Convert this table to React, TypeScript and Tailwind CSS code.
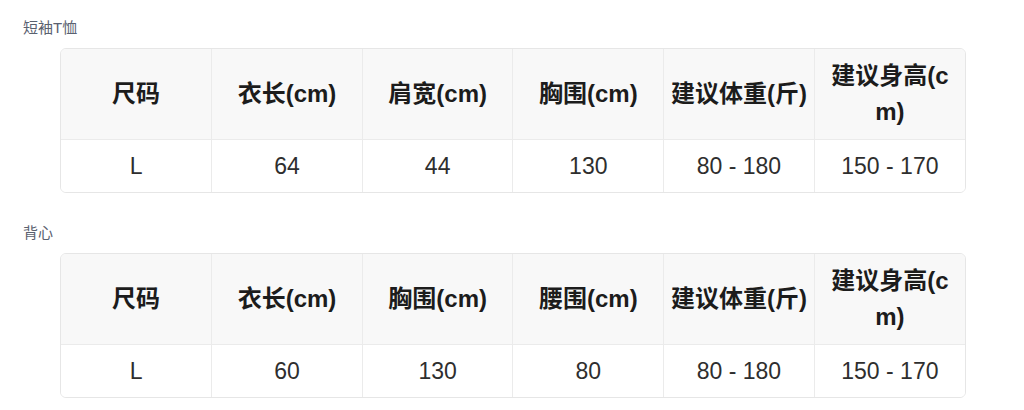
const FONT = "font-['Liberation_Sans','Noto_Sans_CJK_SC',sans-serif]";

type SizeTable = {
  title: string;
  headers: string[];
  rows: string[][];
};

const tables: SizeTable[] = [
  {
    title: '短袖T恤',
    headers: ['尺码', '衣长(cm)', '肩宽(cm)', '胸围(cm)', '建议体重(斤)', '建议身高(cm)'],
    rows: [['L', '64', '44', '130', '80 - 180', '150 - 170']],
  },
  {
    title: '背心',
    headers: ['尺码', '衣长(cm)', '胸围(cm)', '腰围(cm)', '建议体重(斤)', '建议身高(cm)'],
    rows: [['L', '60', '130', '80', '80 - 180', '150 - 170']],
  },
];

function SizeSection({ table, first }: { table: SizeTable; first: boolean }) {
  return (
    <section className={first ? '' : 'mt-[30px]'}>
      <h3 className="pl-[23px] text-[15px] leading-[20px] text-[#5a6170]">{table.title}</h3>
      <div className="ml-[60px] mt-[10px] w-[906px] overflow-hidden rounded-md border border-[#e6e6e6]">
        <table className="w-full table-fixed border-collapse">
          <thead>
            <tr className="bg-[#f8f8f8]">
              {table.headers.map((h, i) => (
                <th
                  key={h + i}
                  className={`border-b border-[#ebebeb] px-[6px] py-[9px] text-center align-middle text-[24px] font-bold leading-[36px] text-[#1c1c1c] break-all ${
                    i < table.headers.length - 1 ? 'border-r' : ''
                  }`}
                >
                  {h}
                </th>
              ))}
            </tr>
          </thead>
          <tbody>
            {table.rows.map((row, r) => (
              <tr key={r} className="bg-white">
                {row.map((cell, i) => (
                  <td
                    key={i}
                    className={`border-[#ebebeb] px-[6px] py-[8px] text-center text-[23px] leading-[36px] text-[#2e2e2e] ${
                      i < row.length - 1 ? 'border-r' : ''
                    }`}
                  >
                    {cell}
                  </td>
                ))}
              </tr>
            ))}
          </tbody>
        </table>
      </div>
    </section>
  );
}

export default function App() {
  return (
    <div className={`${FONT} h-[410px] w-[1024px] overflow-hidden bg-white pt-[18px]`}>
      {tables.map((t, i) => (
        <SizeSection key={t.title} table={t} first={i === 0} />
      ))}
    </div>
  );
}
